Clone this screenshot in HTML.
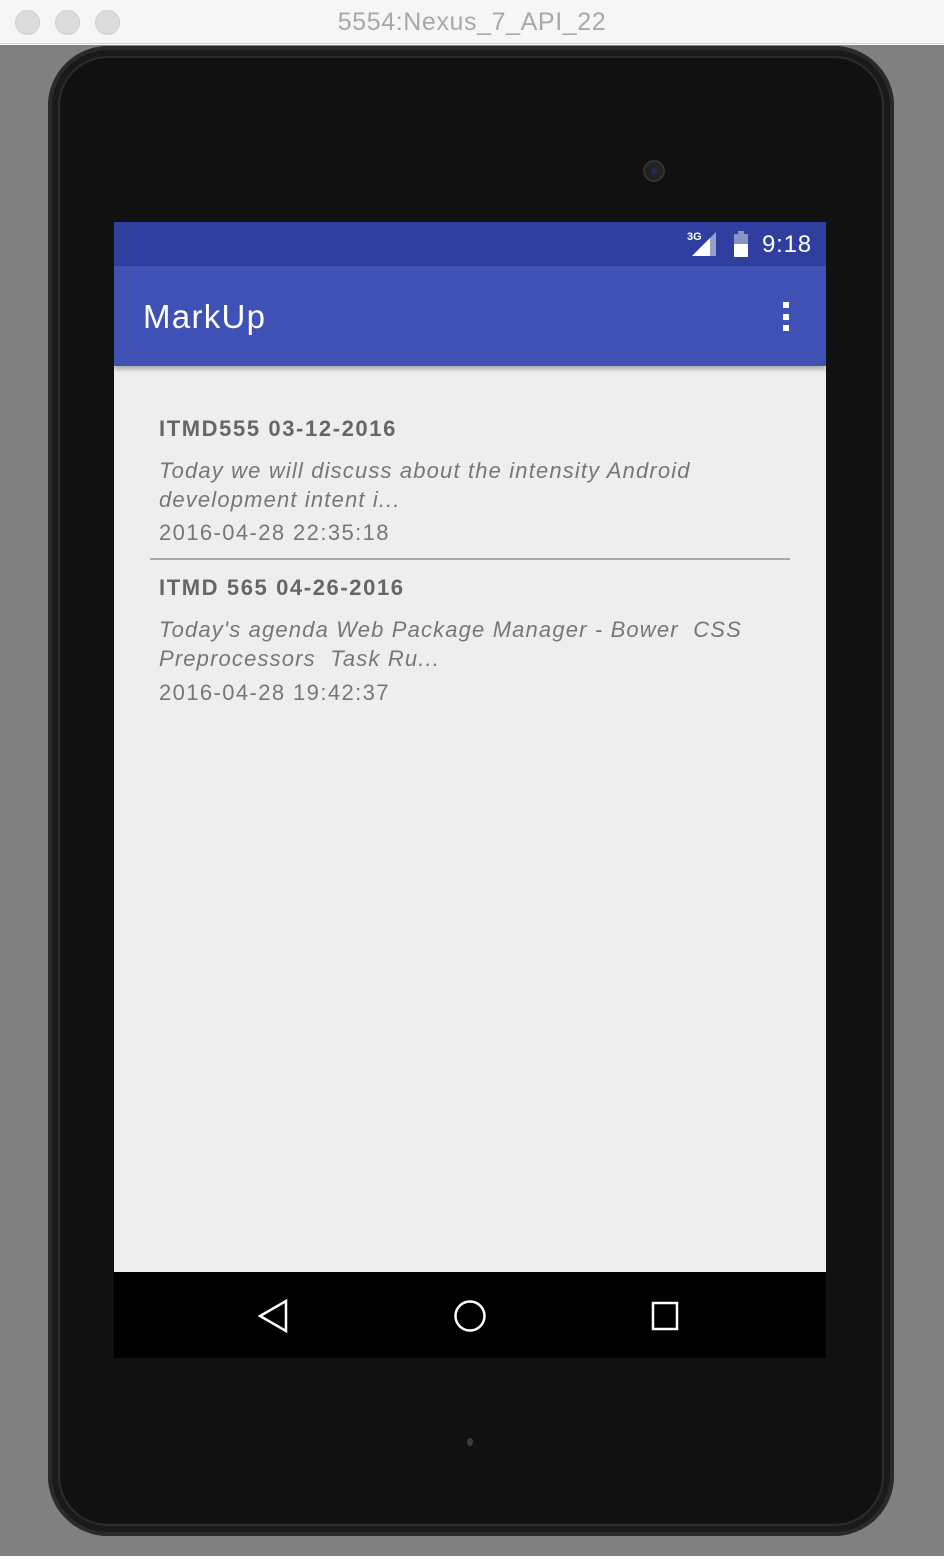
<!DOCTYPE html>
<html><head><style>
*{margin:0;padding:0;box-sizing:border-box}
body{width:944px;height:1564px;background:#fff;position:relative;overflow:hidden;font-family:"Liberation Sans",sans-serif}
.title{position:absolute;left:0;top:0;width:944px;height:44px;background:#f6f6f6;border-bottom:1px solid #d0d0d0;text-align:center;line-height:44px;font-size:25px;color:#a8a8a8;letter-spacing:0.6px}
.dot{position:absolute;top:10px;width:25px;height:25px;border-radius:50%;background:#dcdcdc;border:1px solid #cfcfcf}
.bg{position:absolute;left:0;top:45px;width:944px;height:1511px;background:#808080}
.dev{position:absolute;left:48px;top:46px;width:846px;height:1490px;background:#1a1a1a;border-radius:60px;box-shadow:inset 0 0 0 4px #2a2a2a}
.dev2{position:absolute;left:58px;top:56px;width:826px;height:1470px;background:#111;border-radius:50px;border:2px solid #2c2c2c}
.screen{position:absolute;left:114px;top:222px;width:712px;height:1136px;background:#eeeeee;overflow:hidden}
.sb{position:absolute;left:0;top:0;width:712px;height:44px;background:#303f9f}
.tb{position:absolute;left:0;top:44px;width:712px;height:100px;background:#3f51b5;box-shadow:0 3px 5px rgba(0,0,0,.3)}
.nav{position:absolute;left:0;top:1050px;width:712px;height:86px;background:#000}
.h{position:absolute;left:45px;font-size:22px;font-weight:bold;color:#666;letter-spacing:1.6px}
.i{position:absolute;left:45px;font-size:22px;font-style:italic;color:#777;line-height:29px;letter-spacing:1.15px}
.d{position:absolute;left:45px;font-size:22px;color:#777;letter-spacing:1.4px}
</style></head><body>
<div class="title">5554:Nexus_7_API_22</div>
<div class="dot" style="left:15px"></div><div class="dot" style="left:55px"></div><div class="dot" style="left:95px"></div>
<div class="bg"></div>
<div class="dev"></div><div class="dev2"></div>
<div style="position:absolute;left:643px;top:160px;width:22px;height:22px;border-radius:50%;background:#222;border:2px solid #333"></div>
<div style="position:absolute;left:651px;top:168px;width:6px;height:6px;border-radius:50%;background:#1e2a66"></div>
<div style="position:absolute;left:467px;top:1438px;width:6px;height:8px;border-radius:50%;background:#3a3a3a"></div>
<div class="screen">
 <div class="sb">
  <div style="position:absolute;left:573px;top:9px;font-size:11px;font-weight:bold;color:#fff">3G</div>
  <svg style="position:absolute;left:578px;top:10px" width="26" height="24"><polygon points="24,0 24,24 0,24" fill="#fff" opacity=".5"/><polygon points="18,6 18,24 0,24" fill="#fff"/></svg>
  <svg style="position:absolute;left:619px;top:9px" width="16" height="26"><rect x="5" y="0" width="6" height="3" fill="#8a93c8"/><rect x="1" y="3" width="14" height="23" fill="#8a93c8"/><rect x="1" y="13" width="14" height="13" fill="#fff"/></svg>
  <div style="position:absolute;left:648px;top:9px;font-size:24px;color:#fff;letter-spacing:0.8px">9:18</div>
 </div>
 <div class="tb">
  <div style="position:absolute;left:29px;top:32px;font-size:33px;color:#fff;letter-spacing:1.3px">MarkUp</div>
  <div style="position:absolute;left:669px;top:36px;width:6px;height:6px;background:#fff"></div>
  <div style="position:absolute;left:669px;top:48px;width:6px;height:6px;background:#fff"></div>
  <div style="position:absolute;left:669px;top:59px;width:6px;height:6px;background:#fff"></div>
 </div>
 <div class="h" style="top:194px">ITMD555 03-12-2016</div>
 <div class="i" style="top:234px">Today we will discuss about the intensity Android<br>development intent i...</div>
 <div class="d" style="top:298px">2016-04-28 22:35:18</div>
 <div style="position:absolute;left:36px;top:336px;width:640px;height:2px;background:#aaa"></div>
 <div class="h" style="top:353px">ITMD 565 04-26-2016</div>
 <div class="i" style="top:393px">Today's agenda Web Package Manager - Bower &nbsp;CSS<br>Preprocessors &nbsp;Task Ru...</div>
 <div class="d" style="top:458px">2016-04-28 19:42:37</div>
 <div class="nav">
  <svg style="position:absolute;left:143px;top:26px" width="32" height="36"><polygon points="29,3 29,33 3,18" fill="none" stroke="#fff" stroke-width="2.5"/></svg>
  <svg style="position:absolute;left:338px;top:26px" width="36" height="36"><circle cx="18" cy="18" r="14.5" fill="none" stroke="#fff" stroke-width="2.5"/></svg>
  <svg style="position:absolute;left:536px;top:28px" width="30" height="32"><rect x="3" y="3" width="24" height="26" fill="none" stroke="#fff" stroke-width="2.5"/></svg>
 </div>
</div>
</body></html>
